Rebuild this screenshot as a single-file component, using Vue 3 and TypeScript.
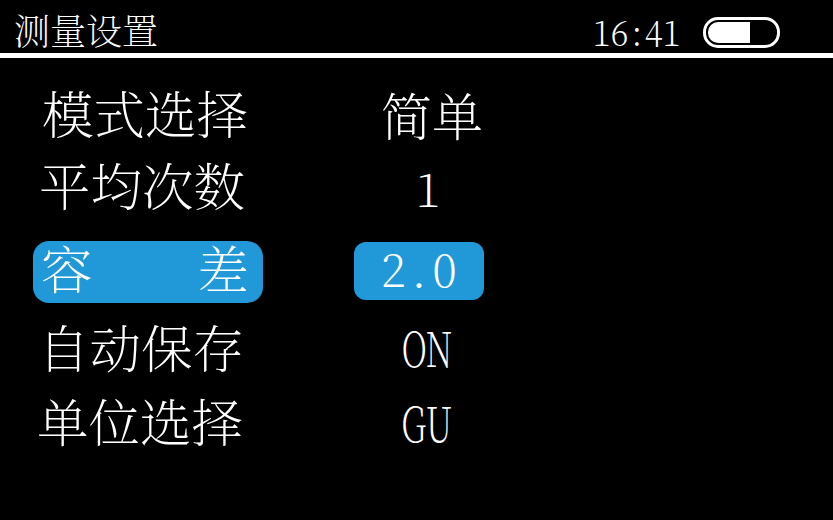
<script setup lang="ts">
interface Row { label: string[]; value: string; active?: boolean }
const rows: Row[] = [
  { label: ['模式选择'], value: '简单' },
  { label: ['平均次数'], value: '1' },
  { label: ['容', '差'], value: '2.0', active: true },
  { label: ['自动保存'], value: 'ON' },
  { label: ['单位选择'], value: 'GU' },
]
const isLatin = (text: string): boolean => /^[\x00-\x7f]+$/.test(text)
</script>

<template>
  <div class="screen">
    <header class="top">
      <h1 class="title">测量设置</h1>
      <div class="status">
        <span class="time mono">
          <span v-for="(c, i) in '16:41'" :key="i" class="cell"><span class="glyph">{{ c }}</span></span>
        </span>
        <span class="battery"><span class="charge"></span></span>
      </div>
    </header>
    <main class="list">
      <div v-for="row in rows" :key="row.value" class="row" :class="{ active: row.active }">
        <div class="label">
          <span v-for="part in row.label" :key="part">{{ part }}</span>
        </div>
        <div class="value">
          <span v-if="isLatin(row.value)" class="mono">
            <span v-for="(c, i) in row.value" :key="i" class="cell"><span class="glyph">{{ c }}</span></span>
          </span>
          <span v-else class="cjk">{{ row.value }}</span>
        </div>
      </div>
    </main>
  </div>
</template>

<style>
html, body { margin: 0; background: #000; }
</style>

<style scoped>
.screen {
  width: 833px;
  height: 520px;
  background: #000;
  color: #fff;
  overflow: hidden;
  font-family: "Noto Serif CJK SC", "Noto Sans CJK SC", serif;
  white-space: nowrap;
}
.top {
  height: 53px;
  border-bottom: 5px solid #fff;
  display: flex;
  align-items: flex-start;
  justify-content: space-between;
  padding: 0 53px 0 14px;
}
.title {
  margin: 12px 0 0;
  font-size: 36px;
  line-height: 1;
  font-weight: 200;
}
.status { display: flex; align-items: flex-start; gap: 23px; margin-top: 17px; }
.mono { display: inline-flex; font-weight: 200; line-height: 1; }
.cell {
  display: inline-flex;
  justify-content: center;
  width: 25.5px;
}
.glyph {
  display: inline-block;
  transform: scaleX(1);
}
.time {
  font-size: 36px;
  width: 87px;
  line-height: 36px;
  margin-top: -4px;
}
.time .cell { width: 17.5px; }
.time .glyph { transform: scaleX(0.92); }
.battery {
  box-sizing: border-box;
  width: 77px;
  height: 31px;
  border: 3px solid #fff;
  border-radius: 15px;
  padding: 2px;
  display: block;
}
.charge {
  display: block;
  width: 42px;
  height: 21px;
  background: #fff;
  border-radius: 10px 0 0 10px;
}
.list { padding-top: 26px; display: flex; flex-direction: column; }
.row {
  display: flex;
  align-items: flex-start;
  height: 62px;
  margin-left: 33px;
}
.row:nth-child(2) { margin-top: 11px; }
.row:nth-child(3) { margin-top: 22px; }
.row:nth-child(4) { margin-top: 16px; }
.row:nth-child(5) { margin-top: 12px; }
.label {
  box-sizing: border-box;
  width: 230px;
  height: 62px;
  padding: 0 15px 6px 8px;
  display: flex;
  justify-content: space-between;
  align-items: center;
  font-size: 51.5px;
  line-height: 1;
  border-radius: 16px;
  font-weight: 200;
}
.row:nth-child(1) .label { padding-left: 9px; padding-bottom: 4px; }
.row:nth-child(2) .label { padding-left: 6px; }
.row:nth-child(3) .label { padding-bottom: 9px; padding-right: 14px; }
.row:nth-child(4) .label { padding-left: 5px; }
.row:nth-child(5) .label { padding-left: 4px; }
.value {
  box-sizing: border-box;
  width: 130px;
  height: 58px;
  margin: 1px 0 0 91px;
  display: flex;
  align-items: center;
  justify-content: center;
  font-size: 46px;
  line-height: 1;
  border-radius: 12px;
}
.cjk { font-size: 51px; font-weight: 200; }
.row:nth-child(1) .value { padding-left: 26px; }
.row:nth-child(2) .value { padding-left: 18px; }
.row:nth-child(3) .value { padding-bottom: 8px; }
.row:nth-child(4) .value { padding-left: 15px; padding-bottom: 5px; font-size: 48px; }
.row:nth-child(5) .value { padding-left: 14px; padding-bottom: 3px; font-size: 48px; }
.row:nth-child(4) .glyph, .row:nth-child(5) .glyph { transform: scaleX(0.7); }
.active .label, .active .value { background: #2199d9; }
</style>
